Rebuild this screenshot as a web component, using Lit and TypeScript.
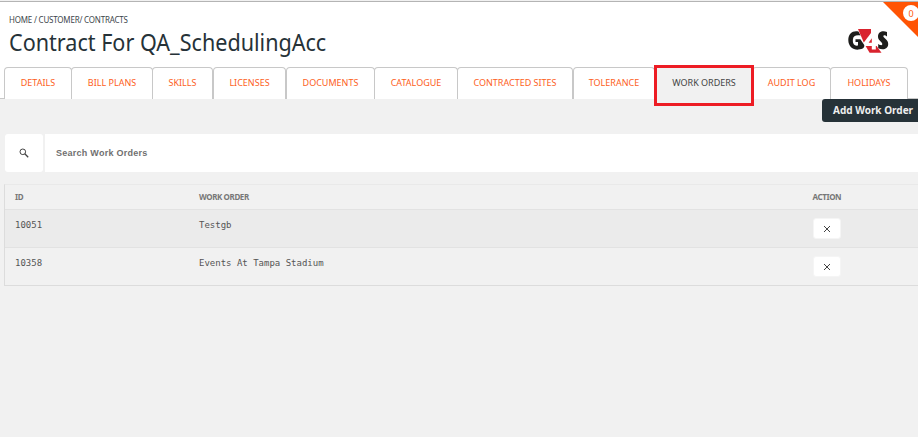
import { LitElement, html, css } from "lit";
import { customElement, property } from "lit/decorators.js";
import { classMap } from "lit/directives/class-map.js";

interface Tab { label: string; width: number; active?: boolean; apart?: boolean }

const TABS: Tab[] = [
  { label: "DETAILS", width: 68 },
  { label: "BILL PLANS", width: 82 },
  { label: "SKILLS", width: 61, apart: true },
  { label: "LICENSES", width: 73, apart: true },
  { label: "DOCUMENTS", width: 89 },
  { label: "CATALOGUE", width: 84 },
  { label: "CONTRACTED SITES", width: 116, apart: true },
  { label: "TOLERANCE", width: 82, apart: true },
  { label: "WORK ORDERS", width: 98, active: true },
  { label: "AUDIT LOG", width: 79 },
  { label: "HOLIDAYS", width: 78 },
];

const ORDERS = [
  { id: "10051", name: "Testgb" },
  { id: "10358", name: "Events At Tampa Stadium" },
];

@customElement("page-header")
export class PageHeader extends LitElement {
  static styles = css`
    :host { display: flex; justify-content: space-between; position: relative; height: 64px;
      background: #fff; border-top: 1px solid #b4b4b4; overflow: hidden; }
    .titles { padding: 12px 0 0 9px; color: #263238; }
    .crumbs { font-size: 8.5px; line-height: 12px; letter-spacing: -0.2px; white-space: pre; color: #3c464b;
      transform-origin: 0 50%; transform: scaleX(0.937); }
    h1 { margin: 0; font-size: 23px; line-height: 33px; font-weight: 400; white-space: nowrap;
      transform-origin: 0 50%; transform: scaleX(0.938); }
    .logo { width: 42px; height: 26px; margin: 26px 29px 0 0; }
    .corner { position: absolute; right: 0; top: 0; width: 35px; height: 35px; }
    .count { position: absolute; right: -1px; top: 3px; width: 16px; height: 16px; border-radius: 50%;
      background: #fff; color: #ff5a0a; font-size: 9px; line-height: 17px; text-align: center; }
  `;
  render() {
    return html`
      <div class="titles">
        <div class="crumbs">HOME / CUSTOMER/ CONTRACTS</div>
        <h1>Contract For QA_SchedulingAcc</h1>
      </div>
      <svg class="logo" viewBox="0 0 42 26">
        <path d="M11.5 3.6C6 2.2 1.3 5.5 1.3 12C1.3 18.5 6 22 11.5 21.6C13.5 21.4 15.5 21 16.8 19.6L17.6 17.6L13.4 11.2H8.5V14H11V17.6C6.5 18.4 5.6 14.5 5.9 11.5C6.2 8 9 6.8 13.6 7.6Z" fill="#1d1d1b"/>
        <path d="M40 4V8.4C37.5 6.4 35.4 7.2 36.8 9.2C38.8 11.6 41.4 12.4 41.2 16.2C41 21 36 22.6 31.2 20.2V16C34 18 36.4 17.4 34.8 14.8C33 12.6 31 11.8 31 8.6C31 3.8 35.6 2.3 40 4Z" fill="#1d1d1b"/>
        <path d="M11 1H24V5L16.8 14.4Z" fill="#d9232e"/>
        <path d="M18.6 18H29.6L34.5 24.8H22.6Z" fill="#d9232e"/>
        <path d="M24.6 5.2H28.8V14.8H30.8V18H28.8V21.6H24.8V18H17.6V14.8Z" fill="#fff"/>
        <path d="M24.8 10.2V14.8H21.6Z" fill="#d9232e"/>
      </svg>
      <svg class="corner" viewBox="0 0 35 35"><path d="M0 0H35V35Z" fill="#ff5404"/></svg>
      <span class="count">0</span>
    `;
  }
}

@customElement("tab-strip")
export class TabStrip extends LitElement {
  @property({ attribute: false }) tabs: Tab[] = [];
  static styles = css`
    :host { display: flex; height: 33px; padding-left: 4px; background: #fff; box-shadow: inset 0 -1px #c8c8c8; }
    .tab { box-sizing: border-box; flex: none; height: 32px; border: 1px solid #c8c8c8; border-bottom: 0;
      border-radius: 4px 4px 0 0; margin: 1px -1px 0 0; background: #fff; color: #fd5e1c; font-size: 9px;
      line-height: 30px; text-align: center; white-space: nowrap; }
    .apart { margin-right: 0; }
    .active { position: relative; background: #f1f1f1; color: #444; border-color: transparent; }
    .frame { position: absolute; left: -2px; top: -3px; width: 94px; height: 35px; border: 3px solid #ed1c24; }
  `;
  render() {
    return this.tabs.map((t) => html`
      <div class=${classMap({ tab: true, active: !!t.active, apart: !!t.apart })} style="width:${t.width}px">
        ${t.label}${t.active ? html`<span class="frame"></span>` : ""}
      </div>`);
  }
}

@customElement("orders-table")
export class OrdersTable extends LitElement {
  static styles = css`
    :host { display: block; margin: 12px 0 0 4px; border: 1px solid #dcdcdc; border-right: 0; border-top-color: #e9e9e9; }
    .row { display: grid; grid-template-columns: 184px 613.5px 1fr; padding-left: 10px; height: 37px;
      border-top: 1px solid #e2e2e2; font: 9px/30px "DejaVu Sans Mono", monospace; color: #555; }
    .row:nth-child(even) { background: #ebebeb; }
    .head { height: 24px; border-top: 0; font: 700 8px/24px "Noto Sans", sans-serif; letter-spacing: -0.4px; color: #777; }
    button { width: 28px; height: 21px; margin: 8px 0 0 0.5px; padding: 0; border: 1px solid #f5f5f5; border-radius: 3px;
      background: #fff; display: flex; align-items: center; justify-content: center; }
    svg { width: 8px; height: 8px; }
  `;
  render() {
    return html`
      <div class="row head"><span>ID</span><span>WORK ORDER</span><span>ACTION</span></div>
      ${ORDERS.map((o) => html`
        <div class="row"><span>${o.id}</span><span>${o.name}</span>
          <button aria-label="Remove"><svg viewBox="0 0 8 8"><path d="M1 1L7 7M7 1L1 7" stroke="#444" stroke-width="1"/></svg></button>
        </div>`)}
    `;
  }
}

@customElement("app-root")
export class AppRoot extends LitElement {
  static styles = css`
    :host { display: block; box-sizing: border-box; height: 437px; padding-top: 1px; overflow: hidden; background: #f1f1f1;
      font-family: "Noto Sans", sans-serif; }
    .actions { display: flex; justify-content: flex-end; height: 35px; }
    .add { width: 96px; height: 23px; padding: 0 0 0 11px; border: 0; border-radius: 3px 0 0 3px; background: #263238;
      color: #eee; font: 700 10px/23px "Noto Sans", sans-serif; text-align: left; white-space: nowrap; }
    .search { display: flex; gap: 2px; height: 38px; margin-left: 5px; }
    .icon { width: 38px; background: #fff; border-radius: 3px; display: flex; align-items: center; justify-content: center; }
    .icon svg { width: 10px; height: 10px; }
    .field { flex: 1; padding-left: 11px; background: #fff; color: #707070; font: 700 9px/38px "Liberation Sans", sans-serif; letter-spacing: 0.26px; }
  `;
  render() {
    return html`
      <page-header></page-header>
      <tab-strip .tabs=${TABS}></tab-strip>
      <div class="actions"><button class="add">Add Work Order</button></div>
      <div class="search">
        <div class="icon"><svg viewBox="0 0 10 10"><circle cx="3.8" cy="3.8" r="2.8" fill="none" stroke="#444" stroke-width="1"/><path d="M5.8 5.8L9.2 9.2" stroke="#444" stroke-width="1.3"/></svg></div>
        <div class="field">Search Work Orders</div>
      </div>
      <orders-table></orders-table>
    `;
  }
}
